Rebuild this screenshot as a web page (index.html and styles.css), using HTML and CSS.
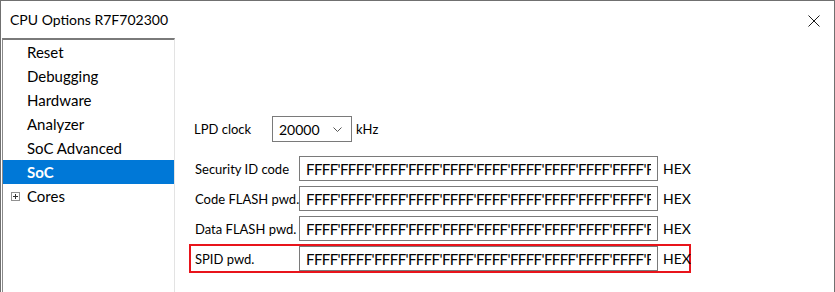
FILE: index.html
```html
<!DOCTYPE html>
<html lang="en">
<head>
    <meta charset="UTF-8">
    <title>CPU Options R7F702300</title>
    <link rel="stylesheet" href="styles.css">
</head>
<body>
    <div class="window">
        <div class="titlebar">
            <span class="title">CPU Options R7F702300</span>
            <svg class="close" width="12" height="12" viewBox="0 0 12 12">
                <path d="M0.5 0.5 L11.5 11.5 M11.5 0.5 L0.5 11.5" stroke="#1a1a1a" stroke-width="1" fill="none"/>
            </svg>
        </div>
        <div class="content">
            <ul class="tree">
                <li class="tree-item">Reset</li>
                <li class="tree-item">Debugging</li>
                <li class="tree-item">Hardware</li>
                <li class="tree-item">Analyzer</li>
                <li class="tree-item">SoC Advanced</li>
                <li class="tree-item selected">SoC</li>
                <li class="tree-item expandable"><span class="expander"></span>Cores</li>
            </ul>

            <div class="panel">
                <div class="clock-row">
                    <label class="clock-label">LPD clock</label>
                    <div class="select">
                        <span>20000</span>
                        <svg class="chevron" width="9" height="5" viewBox="0 0 9 5">
                            <path d="M0.5 0.5 L4.5 4.5 L8.5 0.5" stroke="#555" stroke-width="1" fill="none"/>
                        </svg>
                    </div>
                    <span class="unit">kHz</span>
                </div>

                <div class="codes">
                    <div class="code-row">
                        <label class="code-label">Security ID code</label>
                        <input class="code-input" type="text" value="FFFF'FFFF'FFFF'FFFF'FFFF'FFFF'FFFF'FFFF'FFFF'FFFF'FFFF'FFFF'FFFF'FFFF'FFFF'FFFF">
                        <span class="hex">HEX</span>
                    </div>
                    <div class="code-row">
                        <label class="code-label">Code FLASH pwd.</label>
                        <input class="code-input" type="text" value="FFFF'FFFF'FFFF'FFFF'FFFF'FFFF'FFFF'FFFF'FFFF'FFFF'FFFF'FFFF'FFFF'FFFF'FFFF'FFFF">
                        <span class="hex">HEX</span>
                    </div>
                    <div class="code-row">
                        <label class="code-label">Data FLASH pwd.</label>
                        <input class="code-input" type="text" value="FFFF'FFFF'FFFF'FFFF'FFFF'FFFF'FFFF'FFFF'FFFF'FFFF'FFFF'FFFF'FFFF'FFFF'FFFF'FFFF">
                        <span class="hex">HEX</span>
                    </div>
                    <div class="code-row marked">
                        <label class="code-label">SPID pwd.</label>
                        <input class="code-input" type="text" value="FFFF'FFFF'FFFF'FFFF'FFFF'FFFF'FFFF'FFFF'FFFF'FFFF'FFFF'FFFF'FFFF'FFFF'FFFF'FFFF">
                        <span class="hex">HEX</span>
                    </div>
                </div>
            </div>
        </div>
    </div>
</body>
</html>
```

FILE: styles.css
```css
* {
    box-sizing: border-box;
}
body {
    margin: 0;
    font-family: Lato, "Noto Sans", Arial, sans-serif;
    font-size: 13px;
    color: #000;
    background: #fff;
}
.window {
    height: 292px;
    border: 1px solid #707070;
    border-bottom: none;
    display: flex;
    flex-direction: column;
    overflow: hidden;
}
.titlebar {
    height: 37px;
    display: flex;
    align-items: center;
    justify-content: space-between;
    padding-left: 9px;
}
.title {
    font-size: 14px;
}
.close {
    margin-right: 14px;
    margin-top: 2px;
}
.content {
    flex: 1;
    display: flex;
}
.tree {
    list-style: none;
    margin: 0 0 0 1px;
    padding: 0;
    width: 173px;
    flex-shrink: 0;
    border-top: 2px solid #7a7a7a;
    border-left: 1px solid #8a8a8a;
    border-right: 1px solid #e3e3e3;
}
.tree-item {
    height: 24px;
    line-height: 24px;
    padding-left: 24px;
    font-size: 15px;
    white-space: nowrap;
}
.tree-item.selected {
    background: #0078d7;
    color: #fff;
    font-weight: bold;
}
.tree-item.expandable {
    display: flex;
    align-items: center;
    padding-left: 8px;
}
.expander {
    position: relative;
    width: 9px;
    height: 9px;
    margin-right: 7px;
    border: 1px solid #919191;
    background: #fff;
}
.expander::before,
.expander::after {
    content: "";
    position: absolute;
    background: #333;
}
.expander::before {
    left: 1px;
    top: 3px;
    width: 5px;
    height: 1px;
}
.expander::after {
    left: 3px;
    top: 1px;
    width: 1px;
    height: 5px;
}
.panel {
    flex: 1;
    padding-top: 78px;
    padding-left: 14px;
}
.clock-row {
    display: flex;
    align-items: center;
    height: 26px;
    padding-left: 5px;
}
.clock-label {
    width: 78px;
    flex-shrink: 0;
}
.select {
    width: 80px;
    height: 26px;
    border: 1px solid #7a7a7a;
    display: flex;
    align-items: center;
    justify-content: space-between;
    padding: 0 9px 0 6px;
    font-size: 14px;
}
.unit {
    margin-left: 4px;
}
.codes {
    margin-top: 12px;
    display: flex;
    flex-direction: column;
    gap: 1px;
}
.code-row {
    width: 502px;
    display: flex;
    align-items: center;
    border: 2px solid transparent;
    padding-left: 4px;
}
.code-row.marked {
    border-color: #e8141b;
}
.code-label {
    width: 104px;
    flex-shrink: 0;
    white-space: nowrap;
}
.code-input {
    width: 359px;
    flex-shrink: 0;
    height: 25px;
    border: 1px solid #7a7a7a;
    padding: 0 6px;
    margin: 0;
    font-family: inherit;
    font-size: 15px;
    letter-spacing: -0.6px;
    color: #000;
    outline: none;
}
.hex {
    margin-left: 5px;
    font-size: 14px;
}
```
